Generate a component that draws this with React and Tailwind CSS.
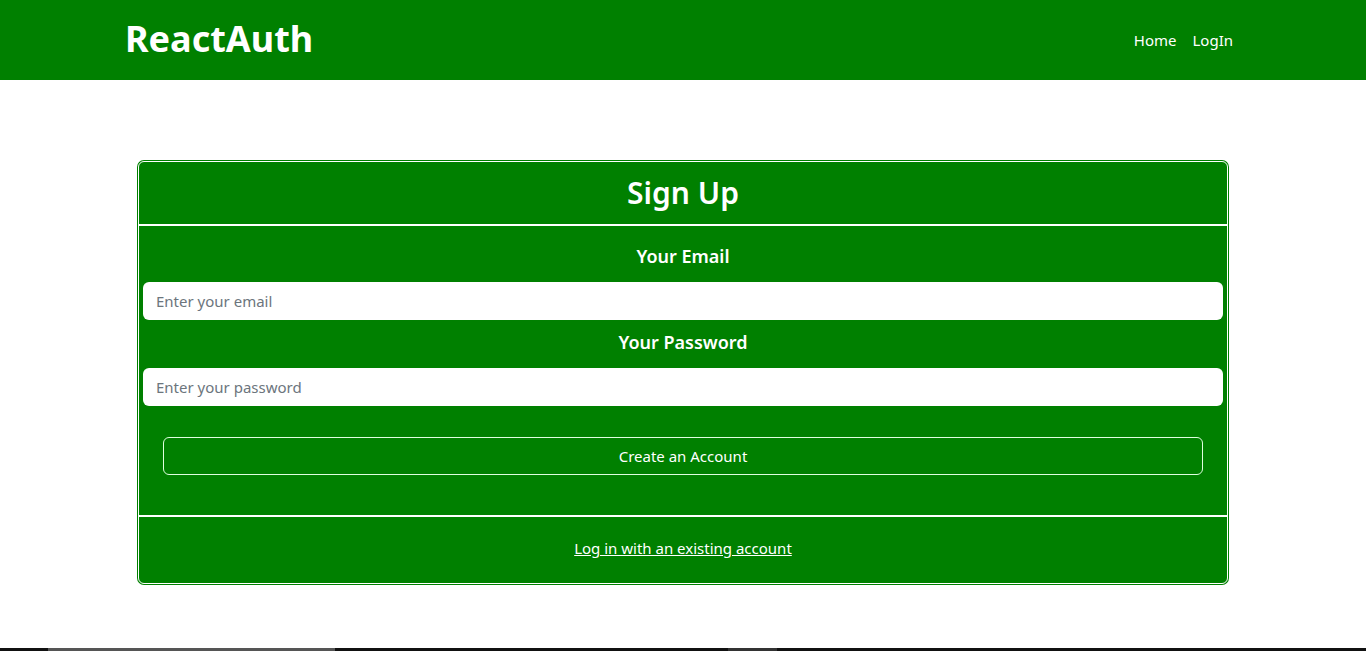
const font = { fontFamily: '"Segoe UI", "Noto Sans", "Open Sans", sans-serif' };

const NavBar = () => {
  const links = [
    { path: "/", title: "Home" },
    { path: "/login", title: "LogIn" },
  ];

  return (
    <header className="h-[80px] bg-[#008000]">
      <div className="mx-auto flex h-full max-w-[1140px] items-center justify-between px-3">
        <a href="#" className="-mt-[3px] text-[36px] font-bold leading-none text-white">
          ReactAuth
        </a>
        <ul className="flex items-center">
          {links.map((item) => (
            <li key={item.title}>
              <a href="#" className="block px-2 text-[15px] text-white">
                {item.title}
              </a>
            </li>
          ))}
        </ul>
      </div>
    </header>
  );
};

const SignUpCard = () => {
  return (
    <section className="mx-[138px] mt-[81px] rounded-[6px] border border-white bg-[#008000] text-white shadow-[0_0_0_1px_#008000]">
      {/* header */}
      <div className="flex h-[64px] items-center justify-center border-b-2 border-white">
        <h2 className="text-[30px] font-semibold leading-none">Sign Up</h2>
      </div>

      {/* form */}
      <form className="flex flex-col px-[4px] pb-[40px]">
        <label className="mt-[18px] text-center text-[18px] font-semibold leading-[24px]">
          Your Email
        </label>
        <input
          type="email"
          placeholder="Enter your email"
          className="mt-[14px] h-[38px] rounded-[6px] bg-white px-[13px] text-[15px] text-[#212529] placeholder:text-[#6c757d] outline-none"
        />
        <label className="mt-[10px] text-center text-[18px] font-semibold leading-[24px]">
          Your Password
        </label>
        <input
          type="password"
          placeholder="Enter your password"
          className="mt-[14px] h-[38px] rounded-[6px] bg-white px-[13px] text-[15px] text-[#212529] placeholder:text-[#6c757d] outline-none"
        />
        <button
          type="button"
          className="mx-[20px] mt-[31px] h-[38px] rounded-[6px] border border-[#dfffdf] text-[15px] text-white"
        >
          Create an Account
        </button>
      </form>

      {/* switch */}
      <div className="flex h-[68px] items-center justify-center border-t-2 border-white">
        <a href="#" className="-mt-[3px] text-[15px] text-white underline">
          Log in with an existing account
        </a>
      </div>
    </section>
  );
};

export default function App() {
  return (
    <div className="flex h-[651px] flex-col bg-white" style={font}>
      <div className="flex-1">
        <NavBar />
        <SignUpCard />
      </div>
      <div className="flex h-[3px] bg-[#111]">
        <div className="ml-[48px] w-[287px] bg-[#555]" />
        <div className="ml-[393px] w-[49px] bg-[#333]" />
      </div>
    </div>
  );
}
